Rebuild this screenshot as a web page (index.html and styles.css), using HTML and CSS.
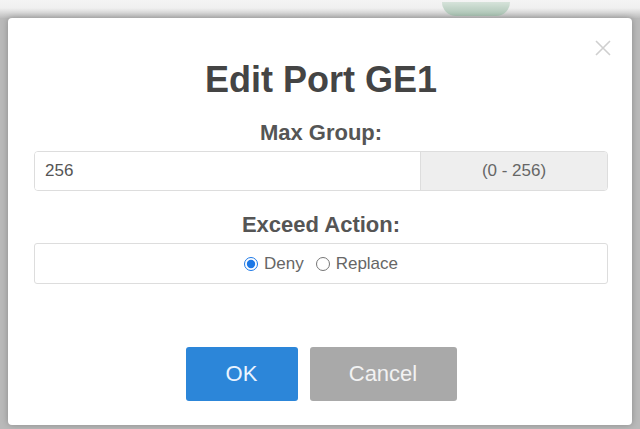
FILE: index.html
```html
<!DOCTYPE html>
<html lang="en">
<head>
    <meta charset="UTF-8">
    <meta name="viewport" content="width=device-width, initial-scale=1.0">
    <title>Edit Port GE1</title>
    <link rel="stylesheet" href="styles.css">
</head>
<body>
    <div class="page-top">
        <span class="page-pill"></span>
    </div>

    <div class="modal">
        <button class="modal-close" type="button" aria-label="Close">
            <svg width="16" height="16" viewBox="0 0 16 16">
                <path d="M1 1 L15 15 M15 1 L1 15" stroke="#cfcfcf" stroke-width="1.6" fill="none"/>
            </svg>
        </button>

        <h1 class="modal-title">Edit Port GE1</h1>

        <label class="field-label" for="max-group">Max Group:</label>
        <div class="input-group">
            <input id="max-group" class="input-text" type="text" value="256">
            <span class="input-addon">(0 - 256)</span>
        </div>

        <div class="field-label">Exceed Action:</div>
        <div class="radio-box">
            <label class="radio"><input type="radio" name="action" checked> Deny</label>
            <label class="radio"><input type="radio" name="action"> Replace</label>
        </div>

        <div class="modal-actions">
            <button class="btn btn-ok" type="button">OK</button>
            <button class="btn btn-cancel" type="button">Cancel</button>
        </div>
    </div>
</body>
</html>
```

FILE: styles.css
```css
body {
    margin: 0;
    height: 429px;
    overflow: hidden;
    background-color: #b9b9b9;
    font-family: "Liberation Sans", Arial, sans-serif;
    color: #555;
}
.page-top {
    height: 18px;
    background: linear-gradient(#f4f4f4 0, #f0f0f0 8px, #bdbdbd 18px);
    position: relative;
}
.page-pill {
    position: absolute;
    left: 442px;
    top: 2px;
    width: 68px;
    height: 14px;
    border-radius: 0 0 14px 14px;
    background: linear-gradient(#d6e3da, #a9c2b2);
}
.modal {
    position: relative;
    margin: 0 8px;
    height: 407px;
    background-color: #fff;
    border-radius: 4px;
    box-shadow: 0 0 6px rgba(0, 0, 0, 0.25);
    padding: 41px 24px 0 26px;
    box-sizing: border-box;
    text-align: center;
}
.modal-close {
    position: absolute;
    top: 22px;
    right: 21px;
    padding: 0;
    border: none;
    background: none;
    line-height: 0;
}
.modal-title {
    margin: 0;
    font-size: 36px;
    line-height: 42px;
    font-weight: bold;
    color: #444;
}
.field-label {
    display: block;
    margin-top: 20px;
    font-size: 22px;
    line-height: 24px;
    font-weight: bold;
    color: #555;
}
.input-group {
    display: flex;
    margin-top: 6px;
    height: 40px;
    border: 1px solid #ddd;
    border-radius: 4px;
    box-sizing: border-box;
    overflow: hidden;
}
.input-text {
    flex: 0 0 386px;
    box-sizing: border-box;
    border: none;
    border-right: 1px solid #ddd;
    padding: 0 10px;
    font-family: inherit;
    font-size: 17px;
    color: #555;
    outline: none;
}
.input-addon {
    flex: 1;
    display: flex;
    align-items: center;
    justify-content: center;
    background-color: #eee;
    font-size: 17px;
    color: #666;
}
.input-group + .field-label {
    margin-top: 22px;
}
.radio-box {
    display: flex;
    justify-content: center;
    align-items: center;
    gap: 12px;
    margin-top: 6px;
    height: 41px;
    border: 1px solid #ddd;
    border-radius: 3px;
    box-sizing: border-box;
    font-size: 17px;
    color: #666;
}
.radio {
    display: flex;
    align-items: center;
    gap: 6px;
}
.radio input {
    margin: 0;
    width: 14px;
    height: 14px;
    accent-color: #1c78e6;
}
.modal-actions {
    display: flex;
    justify-content: center;
    gap: 12px;
    margin-top: 63px;
}
.btn {
    height: 54px;
    border: none;
    border-radius: 3px;
    font-family: inherit;
    font-size: 22px;
    color: #fff;
}
.btn-ok {
    width: 112px;
    background-color: #2c86d9;
    color: #eaf4ff;
}
.btn-cancel {
    width: 147px;
    background-color: #a9a9a9;
    color: #f2f2f2;
}
```
